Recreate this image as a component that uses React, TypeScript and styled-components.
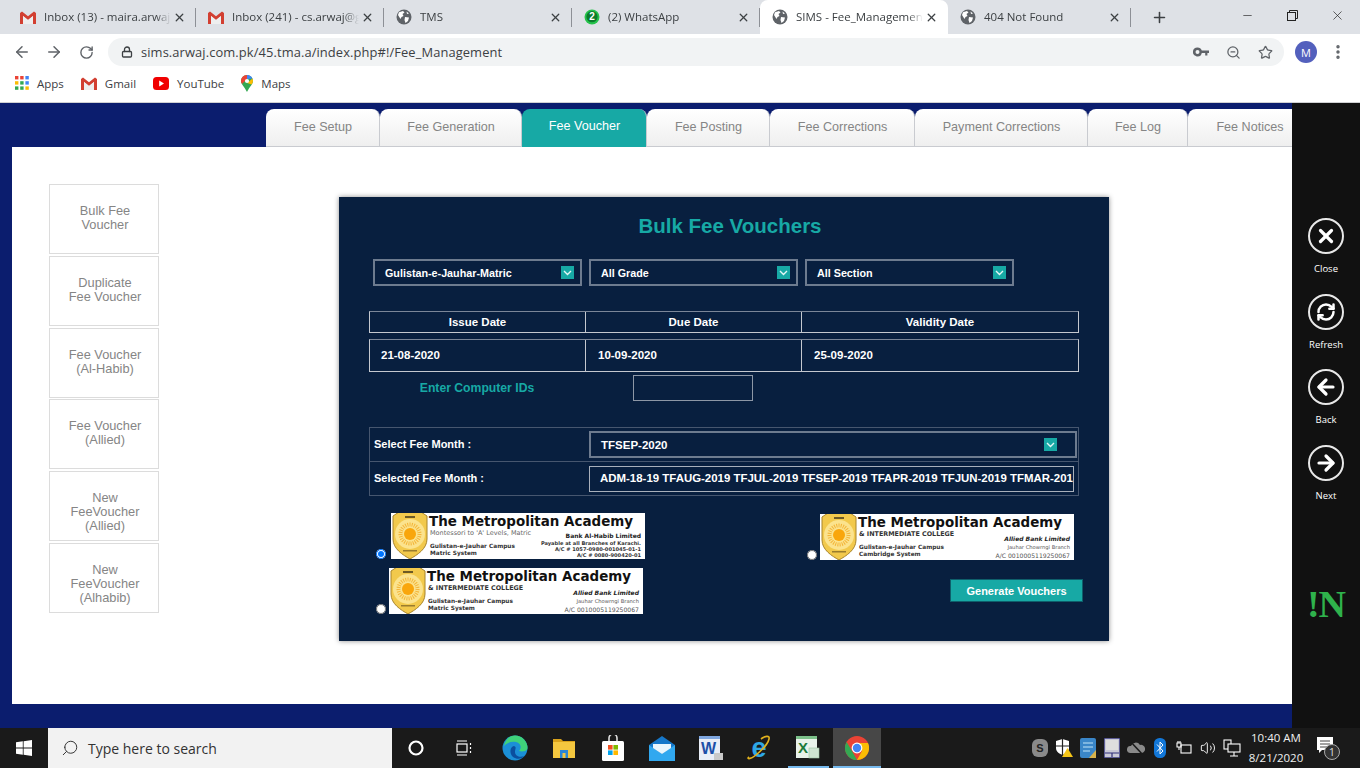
import React from "react";
import styled, { createGlobalStyle } from "styled-components";
import { ArrowLeft, ArrowRight, RotateCw, RefreshCw, Lock, Star, ZoomOut, EllipsisVertical, X, Plus, Minus, Search, Volume2 } from "lucide-react";

const GlobalStyle = createGlobalStyle`
  html, body {
    margin: 0;
    padding: 0;
    background: #fff;
    overflow: hidden;
  }
  * { box-sizing: border-box; }
`;

const Screen = styled.div`
  width: 1360px;
  height: 768px;
  display: flex;
  flex-direction: column;
  overflow: hidden;
  font-family: "Liberation Sans", Arial, sans-serif;
`;

/* browser chrome */
const TabStrip = styled.div`
  height: 34px;
  background: #dee1e6;
  display: flex;
  align-items: stretch;
  padding-left: 8px;
  font-family: "Open Sans", sans-serif;
`;

const BrowserTab = styled.div<{ $active?: boolean; $last?: boolean }>`
  width: ${(p) => (p.$last ? "183px" : "188px")};
  padding: 0 9px 0 12px;
  display: flex;
  align-items: center;
  position: relative;
  background: ${(p) => (p.$active ? "#fff" : "transparent")};
  border-radius: 8px 8px 0 0;
  color: #3c4043;
  &::after {
    content: "";
    display: ${(p) => (p.$active ? "none" : "block")};
    position: absolute;
    right: 0;
    top: 8px;
    height: 19px;
    width: 1px;
    background: #8d9096;
  }
`;

const TabIcon = styled.span`
  width: 16px;
  height: 16px;
  flex: none;
  display: flex;
  align-items: center;
  justify-content: center;
  margin-right: 8px;
`;

const TabTitle = styled.span`
  flex: 1;
  min-width: 0;
  font-size: 11.5px;
  padding-bottom: 2px;
  white-space: nowrap;
  overflow: hidden;
  -webkit-mask-image: linear-gradient(to right, #000 88%, transparent);
  mask-image: linear-gradient(to right, #000 88%, transparent);
`;

const TabClose = styled.span`
  width: 16px;
  flex: none;
  display: flex;
  justify-content: center;
  color: #3c4043;
`;

const NewTab = styled.span`
  width: 56px;
  display: flex;
  align-items: center;
  justify-content: center;
  color: #3c4043;
`;

const WindowControls = styled.div`
  margin-left: auto;
  display: flex;
  align-items: flex-start;
  color: #222;
`;

const WindowButton = styled.span`
  width: 45px;
  height: 30px;
  display: flex;
  align-items: center;
  justify-content: center;
`;

const AddressRow = styled.div`
  height: 36px;
  background: #fff;
  display: flex;
  align-items: center;
  padding: 0 12px 0 6px;
  color: #5f6368;
`;

const NavButton = styled.span`
  width: 32px;
  display: flex;
  justify-content: center;
`;

const Omnibox = styled.div`
  width: 1176px;
  height: 28px;
  margin-left: 6px;
  border-radius: 14px;
  background: #f1f3f4;
  display: flex;
  align-items: center;
  padding: 0 2px 0 13px;
  font-family: "Open Sans", sans-serif;
  font-size: 12.9px;
  color: #3c4043;
`;

const UrlText = styled.span`
  flex: 1;
  margin-left: 8px;
  letter-spacing: 0.1px;
`;

const OmniAction = styled.span`
  width: 32.5px;
  display: flex;
  justify-content: center;
  color: #5f6368;
`;

const Avatar = styled.span`
  width: 22px;
  height: 22px;
  border-radius: 50%;
  background: #5360bd;
  color: #fff;
  font-family: "Open Sans", sans-serif;
  font-size: 11px;
  display: flex;
  align-items: center;
  justify-content: center;
  margin-left: 11px;
`;

const MenuDots = styled.span`
  margin-left: 12px;
  display: flex;
  color: #5f6368;
`;

const BookmarkBar = styled.div`
  height: 33px;
  background: #fff;
  border-bottom: 1px solid #d0d1d3;
  display: flex;
  align-items: center;
  padding: 0 0 6px 15px;
  gap: 17px;
  font-family: "Open Sans", sans-serif;
  font-size: 11.5px;
  color: #3c4043;
`;

const Bookmark = styled.span`
  display: flex;
  align-items: center;
  gap: 8px;
`;

/* page */
const Viewport = styled.div`
  height: 625px;
  display: flex;
`;

const Page = styled.div`
  width: 1292px;
  background: #0b1d6e;
  padding: 6px 0 24px 12px;
  display: flex;
  flex-direction: column;
`;

const PageTabs = styled.div`
  height: 38px;
  padding-left: 254px;
  display: flex;
  overflow: hidden;
`;

const PageTab = styled.div<{ $active?: boolean; $w: number }>`
  width: ${(p) => p.$w}px;
  height: 38px;
  flex: none;
  border-radius: 8px 8px 0 0;
  border-right: 1px solid #c9cbd0;
  border-bottom: ${(p) => (p.$active ? "none" : "1px solid #c9cbd0")};
  background: ${(p) => (p.$active ? "#17a9a5" : "linear-gradient(#ffffff, #efefef)")};
  color: ${(p) => (p.$active ? "#fff" : "#858585")};
  font-size: 12.6px;
  display: flex;
  align-items: center;
  justify-content: center;
  padding: 0 0 ${(p) => (p.$active ? "4px" : "2px")} 1px;
`;

const Content = styled.div`
  flex: 1;
  background: #fff;
  display: flex;
  padding: 37px 0 0 37px;
`;

const SideMenu = styled.div`
  width: 110px;
  display: flex;
  flex-direction: column;
  gap: 1.8px;
`;

const SideItem = styled.div`
  height: 70px;
  border: 1px solid #dcdcdc;
  padding: 19px 0 0 2px;
  text-align: center;
  font-size: 12.8px;
  line-height: 14px;
  color: #858585;
`;

const Card = styled.div`
  width: 770px;
  height: 444px;
  margin: 13px 0 0 180px;
  background: #081f3f;
  box-shadow: 0 0 5px rgba(0, 0, 0, 0.45);
  padding: 16px 30px 0;
  color: #fff;
`;

const Title = styled.h2`
  margin: 0;
  padding-left: 12px;
  text-align: center;
  font-size: 20.5px;
  line-height: 26px;
  font-weight: bold;
  color: #17a9a5;
`;

const FilterRow = styled.div`
  display: flex;
  gap: 7px;
  margin: 20px 0 0 4px;
`;

const SelectBox = styled.div<{ $w?: number; $arrowGap?: number; $size?: number }>`
  width: ${(p) => p.$w ?? 209}px;
  height: 27px;
  flex: none;
  border: 2px solid #6d7b8f;
  display: flex;
  align-items: center;
  justify-content: space-between;
  padding: 0 ${(p) => p.$arrowGap ?? 6}px 0 10px;
  font-size: ${(p) => p.$size ?? 10.75}px;
  font-weight: bold;
`;

const Arrow = styled.span`
  width: 13px;
  height: 13px;
  background: #17a9a5;
  display: flex;
  align-items: center;
  justify-content: center;
`;

const DateHead = styled.div`
  display: grid;
  grid-template-columns: 215px 216px 277px;
  height: 22px;
  margin-top: 25px;
  border: 1px solid #c4c8cf;
  border-top-color: #7b8698;
`;

const DateHeadCell = styled.div`
  display: flex;
  align-items: center;
  justify-content: center;
  font-size: 11.5px;
  font-weight: bold;
  & + & { border-left: 1px solid #c4c8cf; }
`;

const DateRow = styled.div`
  display: grid;
  grid-template-columns: 215px 216px 277px;
  height: 33px;
  margin-top: 6px;
  border: 1px solid #c4c8cf;
  border-top-color: #7b8698;
`;

const DateCell = styled.div`
  display: flex;
  align-items: center;
  padding: 0 0 2px 11px;
  font-size: 11.5px;
  font-weight: bold;
  & + & { border-left: 1px solid #c4c8cf; padding-left: 12px; }
`;

const IdsRow = styled.div`
  display: flex;
  align-items: center;
  margin-top: 3px;
  height: 26px;
`;

const IdsLabel = styled.label`
  width: 216px;
  text-align: center;
  font-size: 12.2px;
  font-weight: bold;
  color: #17a9a5;
  margin-right: 48px;
`;

const IdsInput = styled.input`
  width: 120px;
  height: 26px;
  background: transparent;
  border: 1px solid #8d97a6;
  outline: none;
`;

const MonthTable = styled.div`
  margin-top: 26px;
  border: 1px solid #46566f;
  display: flex;
  flex-direction: column;
  height: 69px;
`;

const MonthRow = styled.div`
  flex: 1;
  display: flex;
  align-items: center;
  & + & { border-top: 1px solid #46566f; }
`;

const MonthLabel = styled.div`
  width: 219px;
  padding: 0 0 2px 4px;
  font-size: 11px;
  font-weight: bold;
  flex: none;
`;

const MonthValue = styled.div`
  width: 485px;
  height: 26px;
  border: 1px solid #a9b0bb;
  display: flex;
  align-items: center;
  padding: 0 0 1px 10px;
  font-size: 11.45px;
  font-weight: bold;
  white-space: nowrap;
  overflow: hidden;
`;

const ChoiceArea = styled.div`
  display: flex;
  justify-content: space-between;
  margin-top: 17px;
  padding-left: 7px;
`;

const ChoiceColumn = styled.div`
  display: flex;
  flex-direction: column;
  gap: 9px;
`;

const RightColumn = styled(ChoiceColumn)`
  align-items: flex-end;
  gap: 19px;
  margin-top: 1px;
`;

const Choice = styled.label<{ $gap: number; $inset?: number }>`
  display: flex;
  align-items: flex-end;
  gap: ${(p) => p.$gap}px;
  margin-right: ${(p) => p.$inset ?? 0}px;
`;

const Radio = styled.input`
  width: 10px;
  height: 10px;
  margin: 0;
  flex: none;
`;

const Banner = styled.div`
  width: 254px;
  height: 46px;
  background: #fff;
  display: flex;
  color: #222;
  overflow: hidden;
  font-family: "DejaVu Sans", sans-serif;
`;

const BannerBody = styled.div`
  flex: 1;
  min-width: 0;
  padding: 2px 4px 0 0;
  display: flex;
  flex-direction: column;
`;

const BannerName = styled.div`
  font-size: 13.45px;
  line-height: 14px;
  font-weight: bold;
  white-space: nowrap;
  color: #111;
`;

const BannerColumns = styled.div`
  flex: 1;
  display: flex;
  justify-content: space-between;
`;

const BannerLeft = styled.div`
  display: flex;
  flex-direction: column;
  justify-content: space-between;
  padding: 0 0 2px 1px;
`;

const BannerTagline = styled.div<{ $bold?: boolean }>`
  font-size: ${(p) => (p.$bold ? "6.4px" : "6.5px")};
  line-height: 8px;
  white-space: nowrap;
  font-weight: ${(p) => (p.$bold ? "bold" : "normal")};
  color: ${(p) => (p.$bold ? "#333" : "#666")};
`;

const BannerCampus = styled.div`
  font-size: 5.8px;
  line-height: 7px;
  font-weight: bold;
  white-space: nowrap;
  color: #333;
`;

const BannerRight = styled.div<{ $bottom?: number }>`
  align-self: flex-end;
  text-align: right;
  padding-bottom: ${(p) => p.$bottom ?? 0}px;
`;

const BankName = styled.div<{ $italic?: boolean }>`
  font-size: 6px;
  line-height: 8px;
  font-weight: bold;
  white-space: nowrap;
  font-style: ${(p) => (p.$italic ? "italic" : "normal")};
`;

const BankLine = styled.div<{ $bold?: boolean; $h?: number; $size?: number }>`
  font-size: ${(p) => p.$size ?? 5.2}px;
  line-height: ${(p) => p.$h ?? 6}px;
  white-space: nowrap;
  font-weight: ${(p) => (p.$bold ? "bold" : "normal")};
  color: ${(p) => (p.$bold ? "#333" : "#555")};
`;

const GenerateButton = styled.button`
  width: 133px;
  height: 23px;
  border: 1px solid #0e5f6b;
  background: #17a9a5;
  color: #fff;
  font-family: "Liberation Sans", Arial, sans-serif;
  font-size: 11px;
  font-weight: bold;
  padding: 0;
  margin-right: -4px;
`;

/* side rail of the overlay */
const Rail = styled.div`
  width: 68px;
  background: #111;
  display: flex;
  flex-direction: column;
  align-items: center;
  padding-top: 115px;
  color: #fff;
  font-family: "Open Sans", sans-serif;
`;

const RailButton = styled.div`
  height: 75.5px;
  display: flex;
  flex-direction: column;
  align-items: center;
`;

const RailCircle = styled.span`
  width: 36px;
  height: 36px;
  border: 2px solid #e8e8e8;
  border-radius: 50%;
  display: flex;
  align-items: center;
  justify-content: center;
`;

const RailLabel = styled.span`
  margin-top: 9px;
  font-size: 9.5px;
  line-height: 12px;
`;

const RailBrand = styled.div`
  margin-top: 66px;
  font-family: "Liberation Serif", serif;
  font-weight: bold;
  font-size: 38px;
  line-height: 36px;
  color: #2fb24c;
  letter-spacing: -1px;
`;

/* taskbar */
const Taskbar = styled.div`
  height: 40px;
  background: #1a1a1a;
  display: flex;
  align-items: stretch;
`;

const StartButton = styled.span`
  width: 48px;
  display: flex;
  align-items: center;
  justify-content: center;
`;

const SearchBox = styled.div`
  width: 344px;
  background: #f2f2f2;
  display: flex;
  align-items: center;
  padding-left: 13px;
  gap: 9px;
  font-family: "Open Sans", sans-serif;
  font-size: 14px;
  color: #333;
`;

const ShellSlot = styled.span<{ $w: number }>`
  width: ${(p) => p.$w}px;
  flex: none;
  display: flex;
  align-items: center;
  justify-content: center;
`;

const AppList = styled.div`
  margin-left: 4px;
  display: flex;
`;

const TaskSlot = styled.span<{ $open?: boolean; $current?: boolean }>`
  width: ${(p) => (p.$current ? "48.8px" : "40.8px")};
  margin: 0 ${(p) => (p.$current ? "0" : "4px")};
  flex: none;
  display: flex;
  align-items: center;
  justify-content: center;
  background: ${(p) => (p.$current ? "#474747" : "transparent")};
  border-bottom: 2px solid ${(p) => (p.$open || p.$current ? "#76b9ed" : "transparent")};
  border-top: 2px solid transparent;
`;

const Tray = styled.div`
  margin-left: auto;
  display: flex;
  align-items: center;
  color: #fff;
`;

const TrayIcon = styled.span`
  width: 24px;
  display: flex;
  justify-content: center;
`;

const Clock = styled.div`
  width: 64px;
  text-align: center;
  font-family: "Open Sans", sans-serif;
  font-size: 11.5px;
  line-height: 20px;
  color: #f0f0f0;
`;

const Notify = styled.span`
  width: 42px;
  margin-right: 10px;
  display: flex;
  justify-content: center;
`;

const GmailIcon = () => (
  <svg width="16" height="13" viewBox="0 0 16 13">
    <path d="M0 2 V13 H3 V5 L8 9 L13 5 V13 H16 V2 L14 0.5 L8 5.2 L2 0.5 Z" fill="#d23f31" />
    <path d="M3 13 V5 L8 9 L13 5 V13 Z" fill="#eee" />
  </svg>
);

const GlobeIcon = () => (
  <svg width="16" height="16" viewBox="0 0 16 16">
    <circle cx="8" cy="8" r="7.5" fill="#5f6368" />
    <path d="M3 3.2 L7 2 L8.5 3.5 L6.5 5 L7.5 7 L5.5 8 L4.5 10 L2 6 Z M9 8 L13 8.5 L12 12 L9.5 14 L8.5 11 Z M10.5 2.5 L13 4.5 L11 5 Z" fill="#fff" />
  </svg>
);

const WhatsAppIcon = () => (
  <svg width="16" height="16" viewBox="0 0 16 16">
    <circle cx="8" cy="8" r="7.5" fill="#25c34b" />
    <circle cx="8" cy="7.7" r="5.6" fill="#0c7b2d" />
    <text x="8" y="11.3" textAnchor="middle" fontSize="10" fontWeight="bold" fontFamily="Liberation Sans" fill="#fff">2</text>
  </svg>
);

const KeyIcon = () => (
  <svg width="16" height="10" viewBox="0 0 16 10">
    <path fillRule="evenodd" d="M4.5 0.5 A4.5 4.5 0 0 1 8.8 3.5 H16 V6 H14.4 V8.4 H12.2 V6 H8.8 A4.5 4.5 0 1 1 4.5 0.5 Z M4.5 3 A2 2 0 1 0 4.5 7 A2 2 0 1 0 4.5 3 Z" fill="#5f6368" />
  </svg>
);

const AppsIcon = () => (
  <svg width="14" height="14" viewBox="0 0 14 14">
    {["#ea4335", "#ea4335", "#4285f4", "#fbbc04", "#34a853", "#4285f4", "#34a853", "#34a853", "#fbbc04"].map((c, i) => (
      <rect key={i} x={(i % 3) * 5.2} y={Math.floor(i / 3) * 5.2} width="3.4" height="3.4" fill={c} />
    ))}
  </svg>
);

const YouTubeIcon = () => (
  <svg width="16" height="13" viewBox="0 0 16 13">
    <rect width="16" height="13" rx="3.5" fill="#f00000" />
    <path d="M6.2 3.6 L11 6.5 L6.2 9.4 Z" fill="#fff" />
  </svg>
);

const MapsIcon = () => (
  <svg width="12" height="17" viewBox="0 0 12 17">
    <path d="M6 0 A6 6 0 0 1 12 6 C12 9 8.5 12 6 17 C3.5 12 0 9 0 6 A6 6 0 0 1 6 0 Z" fill="#34a853" />
    <path d="M1.4 2 A6 6 0 0 1 6 0 L6 4 L1 9 A6 6 0 0 1 1.4 2 Z" fill="#ea4335" />
    <path d="M6 0 A6 6 0 0 1 11.5 3.6 L6 4 Z" fill="#4285f4" />
    <path d="M11.5 3.6 A6 6 0 0 1 10.6 9.6 L6 8 Z" fill="#fbbc04" />
    <circle cx="6" cy="6" r="2.1" fill="#fff" />
  </svg>
);

const Shield = () => (
  <svg width="38" height="46" viewBox="0 0 38 46" style={{ flex: "none" }}>
    <path d="M8 -1 H30 L36 3 V26 C36 36 26 42 19 46 C12 42 2 36 2 26 V3 Z" fill="#f2c94c" stroke="#a8842a" strokeWidth="1" />
    <circle cx="19" cy="21" r="15" fill="#fbe38e" />
    <circle cx="19" cy="21" r="9.5" fill="none" stroke="#f3b53a" strokeWidth="4" strokeDasharray="1 1.2" />
    <circle cx="19" cy="21" r="6" fill="#f9a60c" />
    <rect x="14" y="3" width="10" height="2" fill="#6d5a25" />
    <rect x="12" y="37" width="14" height="1.5" fill="#9a7d2e" />
  </svg>
);

const Chevron = () => (
  <svg width="9" height="6" viewBox="0 0 9 6">
    <path d="M1 1 L4.5 4.5 L8 1" fill="none" stroke="#e4f7f6" strokeWidth="1.4" />
  </svg>
);

const WindowsLogo = () => (
  <svg width="16" height="16" viewBox="0 0 16 16">
    <path d="M0 2.3 L6.8 1.3 V7.6 H0 Z M7.6 1.2 L16 0 V7.6 H7.6 Z M0 8.4 H6.8 V14.7 L0 13.7 Z M7.6 8.4 H16 V16 L7.6 14.8 Z" fill="#fff" />
  </svg>
);

const TaskViewIcon = () => (
  <svg width="16" height="18" viewBox="0 0 16 18" fill="none" stroke="#fff" strokeWidth="1.2">
    <rect x="1" y="5" width="10" height="8" />
    <path d="M1 2 H11 M1 16 H11 M14.5 4 V6 M14.5 8 V10 M14.5 12 V14" />
  </svg>
);

const EdgeIcon = () => (
  <svg width="26" height="26" viewBox="0 0 26 26">
    <circle cx="13" cy="13" r="12.5" fill="#1b8fd6" />
    <path d="M13 0.5 A12.5 12.5 0 0 1 25.5 13 C25.5 16 21 17 17 16 C20 13 19 8 14 7 C9 6 5 8 2 11 C3 5 7 0.5 13 0.5 Z" fill="#3fd27a" />
    <path d="M12 11 C8 12 7 18 11 22 C15 25 20 24 22 21 C18 23 13 21 13 17 C13 14 15 12 12 11 Z" fill="#0b4f9e" />
  </svg>
);

const FolderIcon = () => (
  <svg width="22" height="20" viewBox="0 0 22 20">
    <path d="M0 1 H8 L10 3 H22 V5 H0 Z" fill="#d9a21b" />
    <rect y="4" width="22" height="16" fill="#f4c73f" />
    <path d="M7 20 V12 H15 V20 H12.5 V15 H9.5 V20 Z" fill="#2c86d4" />
  </svg>
);

const StoreIcon = () => (
  <svg width="24" height="26" viewBox="0 0 24 26">
    <path d="M8 7 V3 A4 4 0 0 1 16 3 V7" fill="none" stroke="#ddd" strokeWidth="1.6" />
    <rect x="1" y="6" width="22" height="20" rx="1.5" fill="#fff" />
    <rect x="7" y="10" width="4.6" height="4.6" fill="#f25022" />
    <rect x="12.4" y="10" width="4.6" height="4.6" fill="#7fba00" />
    <rect x="7" y="15.4" width="4.6" height="4.6" fill="#00a4ef" />
    <rect x="12.4" y="15.4" width="4.6" height="4.6" fill="#ffb900" />
  </svg>
);

const MailIcon = () => (
  <svg width="26" height="26" viewBox="0 0 26 26">
    <path d="M13 1 L26 10 V26 H0 V10 Z" fill="#1677c9" />
    <path d="M0 10 L13 19 L26 10 V26 H0 Z" fill="#31a8ef" />
    <path d="M4 9 H22 V13 L13 19 L4 13 Z" fill="#eaf6fd" />
  </svg>
);

const WordIcon = () => (
  <svg width="24" height="24" viewBox="0 0 24 24">
    <rect x="0" y="0" width="21" height="24" fill="#e9eef7" />
    <rect x="0" y="0" width="21" height="3" fill="#7fa7e0" />
    <text x="2" y="18" fontSize="16" fontWeight="bold" fontFamily="Liberation Sans" fill="#1d50a8">W</text>
    <rect x="15" y="17" width="9" height="7" fill="#c9c9c9" />
  </svg>
);

const IeIcon = () => (
  <svg width="24" height="26" viewBox="0 0 24 26">
    <text x="12" y="22" textAnchor="middle" fontSize="27" fontWeight="bold" fontFamily="Liberation Sans" fill="#2ea7e6">e</text>
    <path d="M2 22 C-1 24 3 25 9 20 C15 15 21 9 22 4 C23 0 18 1 14 4" fill="none" stroke="#e3b21d" strokeWidth="1.6" />
  </svg>
);

const ExcelIcon = () => (
  <svg width="24" height="24" viewBox="0 0 24 24">
    <rect x="0" y="0" width="21" height="22" fill="#e9f2ea" />
    <rect x="0" y="0" width="21" height="3" fill="#7cc08a" />
    <text x="2" y="17" fontSize="15" fontWeight="bold" fontFamily="Liberation Sans" fill="#1d7a3a">X</text>
    <rect x="13" y="12" width="10" height="10" fill="#cfe5d2" stroke="#9cc4a2" strokeWidth="0.6" />
  </svg>
);

const ChromeIcon = () => (
  <svg width="24" height="24" viewBox="0 0 24 24">
    <circle cx="12" cy="12" r="12" fill="#ea4335" />
    <path d="M1.6 6 L7 15 L12 24 A12 12 0 0 1 1.6 6 Z" fill="#34a853" />
    <path d="M12 7 H23 A12 12 0 0 1 12 24 L17 15 Z" fill="#fbbc04" />
    <circle cx="12" cy="12" r="5.4" fill="#fff" />
    <circle cx="12" cy="12" r="4.2" fill="#4285f4" />
  </svg>
);

const TrayS = () => (
  <svg width="16" height="18" viewBox="0 0 16 18">
    <rect width="16" height="18" rx="6" fill="#8a8a8a" />
    <text x="8" y="13" textAnchor="middle" fontSize="11" fontWeight="bold" fontFamily="Liberation Sans" fill="#222">S</text>
  </svg>
);

const TrayShield = () => (
  <svg width="18" height="18" viewBox="0 0 18 18">
    <path d="M1 2 L7.5 0 L14 2 V9 C14 13 10 15 7.5 16 C5 15 1 13 1 9 Z" fill="#fff" />
    <path d="M7.5 0 V16 M1 7 H14" stroke="#222" strokeWidth="1.2" />
    <path d="M12.5 9 L18 18 H7 Z" fill="#f5c518" />
  </svg>
);

const TrayApp = () => (
  <svg width="16" height="20" viewBox="0 0 16 20">
    <rect width="16" height="20" rx="2" fill="#3a86c8" />
    <path d="M3 5 H13 M3 9 H13 M3 13 H10" stroke="#bfe3f7" strokeWidth="1.2" />
    <path d="M9 20 L16 12 V20 Z" fill="#d8b24a" />
  </svg>
);

const TrayDisplay = () => (
  <svg width="16" height="20" viewBox="0 0 16 20">
    <rect width="16" height="20" fill="#c9c9d6" stroke="#30307a" strokeWidth="1.4" />
    <rect x="2" y="2" width="12" height="10" fill="#dedede" />
    <path d="M1 15 H15 M8 15 V19" stroke="#30307a" strokeWidth="1.2" />
  </svg>
);

const TrayCloud = () => (
  <svg width="18" height="16" viewBox="0 0 18 16">
    <path d="M3 13 A3.5 3.5 0 0 1 4 6 A5 5 0 0 1 13 5 A4 4 0 0 1 15 13 Z" fill="#8a8a8a" />
    <path d="M3 1 L16 15" stroke="#1a1a1a" strokeWidth="1.6" />
  </svg>
);

const TrayBluetooth = () => (
  <svg width="12" height="20" viewBox="0 0 12 20">
    <rect width="12" height="20" rx="5.5" fill="#1277d8" />
    <path d="M3 6.5 L9 13 L6 16 V4 L9 7 L3 13.5" fill="none" stroke="#fff" strokeWidth="1" />
  </svg>
);

const TrayPower = () => (
  <svg width="16" height="16" viewBox="0 0 16 16" fill="none" stroke="#fff" strokeWidth="1.1">
    <rect x="5" y="5" width="10" height="8" />
    <path d="M1 3 H5 V7 H1 Z M2 1 V3 M4 1 V3 M3 7 V10" />
  </svg>
);

const TrayNetwork = () => (
  <svg width="18" height="18" viewBox="0 0 18 18" fill="none" stroke="#fff" strokeWidth="1.1">
    <rect x="1" y="1" width="7" height="9" />
    <rect x="5" y="5" width="12" height="8" fill="#1a1a1a" />
    <path d="M11 13 V17 M7 17 H15" />
  </svg>
);

const NotifyIcon = () => (
  <svg width="26" height="26" viewBox="0 0 26 26">
    <path d="M1 2 H17 V15 H6 L3 18 V15 H1 Z" fill="#fff" />
    <path d="M4 6 H14 M4 9 H14 M4 12 H11" stroke="#444" strokeWidth="1" />
    <circle cx="16" cy="17" r="7.5" fill="#333" stroke="#aaa" strokeWidth="1" />
    <text x="16" y="21" textAnchor="middle" fontSize="11" fontFamily="Open Sans" fill="#ddd">1</text>
  </svg>
);

const browserTabs = [
  { title: "Inbox (13) - maira.arwaj@gmail.com", icon: <GmailIcon /> },
  { title: "Inbox (241) - cs.arwaj@gmail.com", icon: <GmailIcon /> },
  { title: "TMS", icon: <GlobeIcon /> },
  { title: "(2) WhatsApp", icon: <WhatsAppIcon /> },
  { title: "SIMS - Fee_Management", icon: <GlobeIcon />, active: true },
  { title: "404 Not Found", icon: <GlobeIcon />, last: true },
];

const pageTabs = [
  { label: "Fee Setup", w: 114 },
  { label: "Fee Generation", w: 142 },
  { label: "Fee Voucher", w: 125, active: true },
  { label: "Fee Posting", w: 123 },
  { label: "Fee Corrections", w: 145 },
  { label: "Payment Corrections", w: 173 },
  { label: "Fee Log", w: 100 },
  { label: "Fee Notices", w: 124 },
];

const sideItems = [
  ["Bulk Fee", "Voucher"],
  ["Duplicate", "Fee Voucher"],
  ["Fee Voucher", "(Al-Habib)"],
  ["Fee Voucher", "(Allied)"],
  ["New", "FeeVoucher", "(Allied)"],
  ["New", "FeeVoucher", "(Alhabib)"],
];

const railButtons = [
  { label: "Close", icon: <X size={22} strokeWidth={3.5} /> },
  { label: "Refresh", icon: <RefreshCw size={20} strokeWidth={3} /> },
  { label: "Back", icon: <ArrowLeft size={24} strokeWidth={3.2} /> },
  { label: "Next", icon: <ArrowRight size={24} strokeWidth={3.2} /> },
];

const AlliedBanner: React.FC<{ system: string }> = ({ system }) => (
  <Banner>
    <Shield />
    <BannerBody>
      <BannerName>The Metropolitan Academy</BannerName>
      <BannerColumns>
        <BannerLeft>
          <BannerTagline $bold>&amp; INTERMEDIATE COLLEGE</BannerTagline>
          <div>
            <BannerCampus>Gulistan-e-Jauhar Campus</BannerCampus>
            <BannerCampus>{system}</BannerCampus>
          </div>
        </BannerLeft>
        <BannerRight>
          <BankName $italic>Allied Bank Limited</BankName>
          <BankLine $h={8}>Jauhar Chowrngi Branch</BankLine>
          <BankLine $h={9} $size={6.1}>A/C 0010005119250067</BankLine>
        </BannerRight>
      </BannerColumns>
    </BannerBody>
  </Banner>
);

const App: React.FC = () => {
  return (
    <Screen>
      <GlobalStyle />
      <TabStrip>
        {browserTabs.map((tab) => (
          <BrowserTab key={tab.title} $active={tab.active} $last={tab.last}>
            <TabIcon>{tab.icon}</TabIcon>
            <TabTitle>{tab.title}</TabTitle>
            <TabClose>
              <X size={13} strokeWidth={2.4} />
            </TabClose>
          </BrowserTab>
        ))}
        <NewTab>
          <Plus size={17} strokeWidth={2.2} />
        </NewTab>
        <WindowControls>
          <WindowButton>
            <Minus size={13} strokeWidth={1.2} />
          </WindowButton>
          <WindowButton>
            <svg width="11" height="11" viewBox="0 0 11 11" fill="none" stroke="#222">
              <rect x="0.5" y="2.5" width="8" height="8" />
              <path d="M2.5 2.5 V0.5 H10.5 V8.5 H8.5" />
            </svg>
          </WindowButton>
          <WindowButton>
            <X size={15} strokeWidth={1.1} />
          </WindowButton>
        </WindowControls>
      </TabStrip>

      <AddressRow>
        <NavButton>
          <ArrowLeft size={18} strokeWidth={2} />
        </NavButton>
        <NavButton>
          <ArrowRight size={18} strokeWidth={2} />
        </NavButton>
        <NavButton>
          <RotateCw size={15} strokeWidth={2.2} />
        </NavButton>
        <Omnibox>
          <Lock size={12} strokeWidth={2.6} />
          <UrlText>sims.arwaj.com.pk/45.tma.a/index.php#!/Fee_Management</UrlText>
          <OmniAction>
            <KeyIcon />
          </OmniAction>
          <OmniAction>
            <ZoomOut size={15} />
          </OmniAction>
          <OmniAction>
            <Star size={15} />
          </OmniAction>
        </Omnibox>
        <Avatar>M</Avatar>
        <MenuDots>
          <EllipsisVertical size={18} strokeWidth={2.6} />
        </MenuDots>
      </AddressRow>

      <BookmarkBar>
        <Bookmark>
          <AppsIcon />
          Apps
        </Bookmark>
        <Bookmark>
          <GmailIcon />
          Gmail
        </Bookmark>
        <Bookmark>
          <YouTubeIcon />
          YouTube
        </Bookmark>
        <Bookmark>
          <MapsIcon />
          Maps
        </Bookmark>
      </BookmarkBar>

      <Viewport>
        <Page>
          <PageTabs>
            {pageTabs.map((tab) => (
              <PageTab key={tab.label} $w={tab.w} $active={tab.active}>
                {tab.label}
              </PageTab>
            ))}
          </PageTabs>
          <Content>
            <SideMenu>
              {sideItems.map((lines) => (
                <SideItem key={lines.join(" ")}>
                  {lines.map((line) => (
                    <div key={line}>{line}</div>
                  ))}
                </SideItem>
              ))}
            </SideMenu>

            <Card>
              <Title>Bulk Fee Vouchers</Title>
              <FilterRow>
                {["Gulistan-e-Jauhar-Matric", "All Grade", "All Section"].map((label) => (
                  <SelectBox key={label}>
                    {label}
                    <Arrow>
                      <Chevron />
                    </Arrow>
                  </SelectBox>
                ))}
              </FilterRow>

              <DateHead>
                <DateHeadCell>Issue Date</DateHeadCell>
                <DateHeadCell>Due Date</DateHeadCell>
                <DateHeadCell>Validity Date</DateHeadCell>
              </DateHead>
              <DateRow>
                <DateCell>21-08-2020</DateCell>
                <DateCell>10-09-2020</DateCell>
                <DateCell>25-09-2020</DateCell>
              </DateRow>

              <IdsRow>
                <IdsLabel>Enter Computer IDs</IdsLabel>
                <IdsInput />
              </IdsRow>

              <MonthTable>
                <MonthRow>
                  <MonthLabel>Select Fee Month :</MonthLabel>
                  <SelectBox $w={488} $arrowGap={18} $size={11.5}>
                    TFSEP-2020
                    <Arrow>
                      <Chevron />
                    </Arrow>
                  </SelectBox>
                </MonthRow>
                <MonthRow>
                  <MonthLabel>Selected Fee Month :</MonthLabel>
                  <MonthValue>
                    ADM-18-19 TFAUG-2019 TFJUL-2019 TFSEP-2019 TFAPR-2019 TFJUN-2019 TFMAR-2019
                  </MonthValue>
                </MonthRow>
              </MonthTable>

              <ChoiceArea>
                <ChoiceColumn>
                  <Choice $gap={5}>
                    <Radio type="radio" name="bank" defaultChecked />
                    <Banner>
                      <Shield />
                      <BannerBody>
                        <BannerName>The Metropolitan Academy</BannerName>
                        <BannerColumns>
                          <BannerLeft>
                            <BannerTagline>Montessori to 'A' Levels, Matric</BannerTagline>
                            <div>
                              <BannerCampus>Gulistan-e-Jauhar Campus</BannerCampus>
                              <BannerCampus>Matric System</BannerCampus>
                            </div>
                          </BannerLeft>
                          <BannerRight $bottom={1}>
                            <BankName>Bank Al-Habib Limited</BankName>
                            <BankLine $bold $size={5.1}>Payable at all Branches of Karachi.</BankLine>
                            <BankLine $bold $size={5.1}>A/C # 1057-0980-001045-01-1</BankLine>
                            <BankLine $bold $size={5.1}>A/C # 0080-900420-01</BankLine>
                          </BannerRight>
                        </BannerColumns>
                      </BannerBody>
                    </Banner>
                  </Choice>
                  <Choice $gap={3}>
                    <Radio type="radio" name="bank" />
                    <AlliedBanner system="Matric System" />
                  </Choice>
                </ChoiceColumn>
                <RightColumn>
                  <Choice $gap={3} $inset={5}>
                    <Radio type="radio" name="bank" />
                    <AlliedBanner system="Cambridge System" />
                  </Choice>
                  <GenerateButton>Generate Vouchers</GenerateButton>
                </RightColumn>
              </ChoiceArea>
            </Card>
          </Content>
        </Page>

        <Rail>
          {railButtons.map((btn) => (
            <RailButton key={btn.label}>
              <RailCircle>{btn.icon}</RailCircle>
              <RailLabel>{btn.label}</RailLabel>
            </RailButton>
          ))}
          <RailBrand>!N</RailBrand>
        </Rail>
      </Viewport>

      <Taskbar>
        <StartButton>
          <WindowsLogo />
        </StartButton>
        <SearchBox>
          <Search size={18} strokeWidth={1.3} style={{ transform: "scaleX(-1)" }} />
          Type here to search
        </SearchBox>
        <ShellSlot $w={48}>
          <svg width="16" height="16" viewBox="0 0 16 16">
            <circle cx="8" cy="8" r="6.5" fill="none" stroke="#fff" strokeWidth="2.2" />
          </svg>
        </ShellSlot>
        <ShellSlot $w={47}>
          <TaskViewIcon />
        </ShellSlot>
        <AppList>
          <TaskSlot>
            <EdgeIcon />
          </TaskSlot>
          <TaskSlot>
            <FolderIcon />
          </TaskSlot>
          <TaskSlot>
            <StoreIcon />
          </TaskSlot>
          <TaskSlot>
            <MailIcon />
          </TaskSlot>
          <TaskSlot>
            <WordIcon />
          </TaskSlot>
          <TaskSlot>
            <IeIcon />
          </TaskSlot>
          <TaskSlot $open>
            <ExcelIcon />
          </TaskSlot>
          <TaskSlot $current>
            <ChromeIcon />
          </TaskSlot>
        </AppList>
        <Tray>
          <TrayIcon><TrayS /></TrayIcon>
          <TrayIcon><TrayShield /></TrayIcon>
          <TrayIcon><TrayApp /></TrayIcon>
          <TrayIcon><TrayDisplay /></TrayIcon>
          <TrayIcon><TrayCloud /></TrayIcon>
          <TrayIcon><TrayBluetooth /></TrayIcon>
          <TrayIcon><TrayPower /></TrayIcon>
          <TrayIcon><Volume2 size={16} strokeWidth={1.4} /></TrayIcon>
          <TrayIcon><TrayNetwork /></TrayIcon>
          <Clock>
            10:40 AM
            <br />
            8/21/2020
          </Clock>
          <Notify>
            <NotifyIcon />
          </Notify>
        </Tray>
      </Taskbar>
    </Screen>
  );
};

export default App;
